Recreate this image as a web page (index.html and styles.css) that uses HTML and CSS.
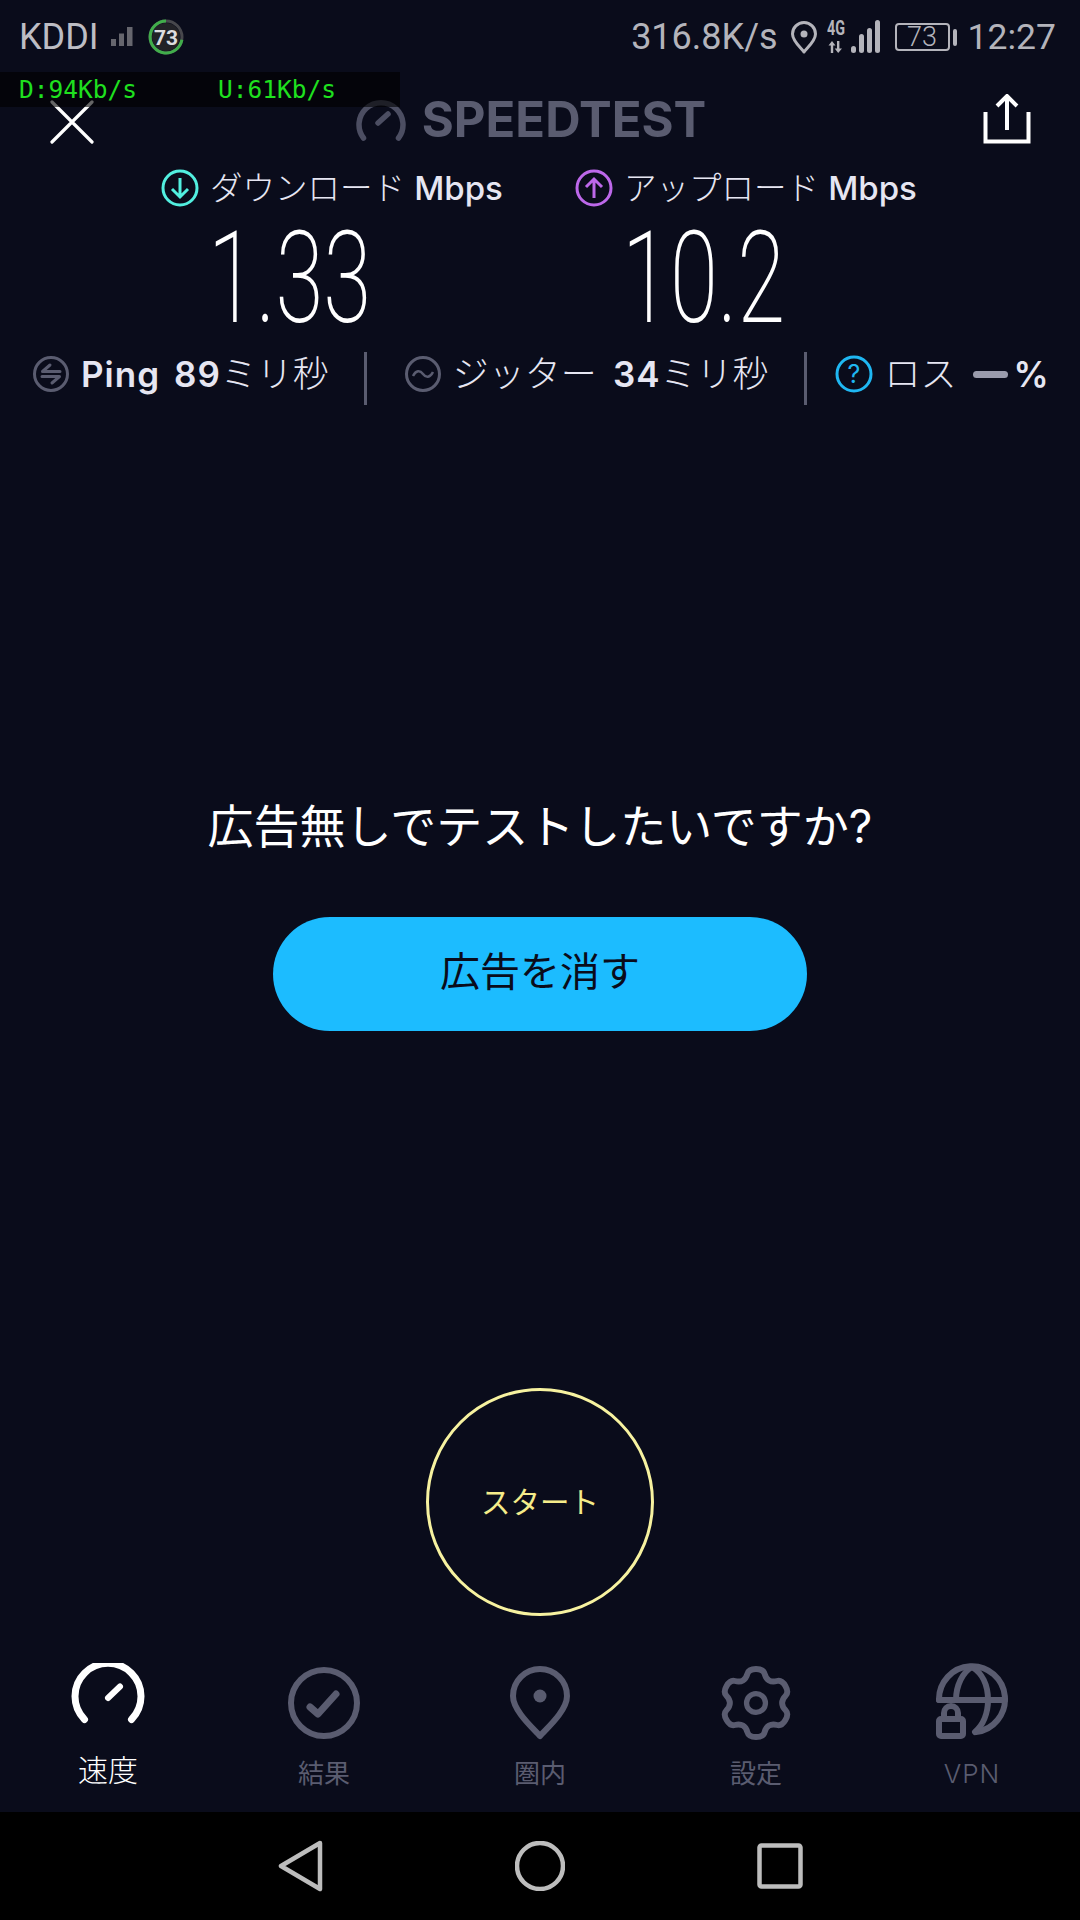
FILE: index.html
```html
<!DOCTYPE html>
<html lang="ja">
<head>
    <meta charset="UTF-8">
    <title>Speedtest</title>
    <link rel="stylesheet" href="styles.css">
</head>
<body>
<div class="screen">

    <!-- status bar -->
    <div class="status">
        <div class="status_l">
            <span class="carrier">KDDI</span>
            <svg class="mini_bars" width="22" height="20" viewBox="0 0 22 20"><path d="M0 12h5v7H0zM8 6.500h5V19H8zM16 0h5.500v19H16z" fill="#66666e"/></svg>
            <svg class="batt_ring" width="36" height="36" viewBox="0 0 36 36">
                <circle cx="18" cy="18" r="14" fill="#222227"/>
                <circle cx="18" cy="18" r="16" fill="none" stroke="#47474c" stroke-width="3"/>
                <path d="M18 2A16 16 0 1 0 33.900 20.800" fill="none" stroke="#41ad4b" stroke-width="3"/>
                <text x="18" y="25.500" text-anchor="middle" class="ring_text">73</text>
            </svg>
        </div>
        <div class="status_r">
            <span class="net">316.8K/s</span>
            <svg class="pin" width="28" height="33" viewBox="0 0 28 33"><path d="M14 31C11 27 2.500 20 2.500 13a11.500 11.500 0 0 1 23 0C25.500 20 17 27 14 31Z" fill="none" stroke="#b4b4bb" stroke-width="3" stroke-linejoin="round"/><circle cx="14" cy="13" r="3.500" fill="#b4b4bb"/></svg>
            <svg class="sig" width="53" height="34" viewBox="0 0 53 34">
                <text x="0" y="15" class="sig_text" textLength="18" lengthAdjust="spacingAndGlyphs">4G</text>
                <path d="M5 21l3.500 4.500H6.200V33H3.800v-7.500H1.500zM10 21h2.400v7.500h2.600L11.200 33l-3.500-4.500H10z" fill="#b4b4bb"/>
                <rect x="24" y="26" width="5" height="7" rx="2.500" fill="#b4b4bb"/>
                <rect x="32" y="14" width="5" height="19" rx="2.500" fill="#b4b4bb"/>
                <rect x="40" y="8" width="5" height="25" rx="2.500" fill="#b4b4bb"/>
                <rect x="48" y="0" width="5" height="33" rx="2.500" fill="#b4b4bb"/>
            </svg>
            <div class="batt"><span class="batt_box">73</span><span class="batt_tip"></span></div>
            <span class="clock">12:27</span>
        </div>
    </div>

    <!-- 通信量オーバーレイ -->
    <div class="netbar"><span class="net_d">D:94Kb/s</span><span class="net_u">U:61Kb/s</span></div>

    <div class="header">
        <svg class="close" width="44" height="44" viewBox="0 0 44 44"><path d="M2 2l40 40M42 2L2 42" stroke="#fff" stroke-width="3.200" stroke-linecap="round"/></svg>
        <div class="logo">
            <svg width="50" height="42" viewBox="0 0 50 42"><path d="M7.500 39A22 22 0 1 1 42.500 39" fill="none" stroke="#4c4e62" stroke-width="5.500" stroke-linecap="round"/><path d="M22 24L32 15" stroke="#4c4e62" stroke-width="5.500" stroke-linecap="round"/></svg>
            <span class="logo_t">SPEEDTEST</span>
        </div>
        <svg class="share" width="48" height="50" viewBox="0 0 48 50"><path d="M2.500 18v29.500h43V18" fill="none" stroke="#fff" stroke-width="4"/><path d="M24 36V3M14 12l10-10 10 10" fill="none" stroke="#fff" stroke-width="4"/></svg>
    </div>

    <div class="speeds">
        <div class="speed">
            <svg class="speed_i" width="38" height="38" viewBox="0 0 38 38"><circle cx="19" cy="19" r="17" fill="none" stroke="#52efe0" stroke-width="3"/><path d="M19 9v19M11 20l8 8 8-8" fill="none" stroke="#52efe0" stroke-width="3"/></svg>
            <div class="speed_b">
                <div class="speed_t">ダウンロード <b>Mbps</b></div>
                <div class="speed_n">1.33</div>
            </div>
        </div>
        <div class="speed">
            <svg class="speed_i" width="38" height="38" viewBox="0 0 38 38"><circle cx="19" cy="19" r="17" fill="none" stroke="#bd68ea" stroke-width="3"/><path d="M19 29V10M11 18l8-8 8 8" fill="none" stroke="#bd68ea" stroke-width="3"/></svg>
            <div class="speed_b">
                <div class="speed_t">アップロード <b>Mbps</b></div>
                <div class="speed_n">10.2</div>
            </div>
        </div>
    </div>

    <div class="stats">
        <svg class="stat_i" width="38" height="38" viewBox="0 0 38 38"><circle cx="19" cy="19" r="16.500" fill="none" stroke="#5a5c70" stroke-width="3"/><path d="M28 16.500H10.500L18 10M10 21.500H27.500L20 28" fill="none" stroke="#5a5c70" stroke-width="3" stroke-linecap="round" stroke-linejoin="round"/></svg>
        <span class="stat_t ping"><b>Ping</b></span>
        <span class="stat_t ping_v"><b>89</b>ミリ秒</span>
        <span class="sep sep_a"></span>
        <svg class="stat_i" width="38" height="38" viewBox="0 0 38 38"><circle cx="19" cy="19" r="16.500" fill="none" stroke="#5a5c70" stroke-width="3"/><path d="M9 21c3-6 7-6 10-2s7 4 10-2" fill="none" stroke="#5a5c70" stroke-width="2.500"/></svg>
        <span class="stat_t jit">ジッター</span>
        <span class="stat_t jit_v"><b>34</b>ミリ秒</span>
        <span class="sep sep_b"></span>
        <svg class="stat_i" width="38" height="38" viewBox="0 0 38 38"><circle cx="19" cy="19" r="17" fill="none" stroke="#1fb7f2" stroke-width="3"/><text x="19" y="28" text-anchor="middle" class="q_text">?</text></svg>
        <span class="stat_t loss">ロス</span>
        <span class="dash"></span>
        <span class="stat_t pct"><b>%</b></span>
    </div>

    <div class="promo">
        <div class="promo_t">広告無しでテストしたいですか?</div>
        <div class="promo_b">広告を消す</div>
    </div>

    <div class="start">スタート</div>

    <!-- tab bar -->
    <div class="tabs">
        <div class="tab on">
            <svg width="80" height="80" viewBox="0 0 80 80"><path d="M16.500 56.500A33 33 0 1 1 63.500 56.500" fill="none" stroke="#fff" stroke-width="7" stroke-linecap="round"/><path d="M40 35L52 23.500" stroke="#fff" stroke-width="6" stroke-linecap="round"/></svg>
            <span>速度</span>
        </div>
        <div class="tab">
            <svg width="80" height="80" viewBox="0 0 80 80"><circle cx="40" cy="40" r="33" fill="none" stroke="#5a5c70" stroke-width="6"/><path d="M26 44l8 7 18-20" fill="none" stroke="#5a5c70" stroke-width="7" stroke-linecap="round" stroke-linejoin="round"/></svg>
            <span>結果</span>
        </div>
        <div class="tab">
            <svg width="80" height="80" viewBox="0 0 80 80"><path d="M40 73C34 66 13 48 13 33A27 27 0 0 1 67 33C67 48 46 66 40 73Z" fill="none" stroke="#5a5c70" stroke-width="6" stroke-linejoin="round"/><circle cx="40" cy="33" r="6.500" fill="#5a5c70"/></svg>
            <span>圏内</span>
        </div>
        <div class="tab">
            <svg width="80" height="80" viewBox="2 2 76 76"><path d="M27.600 18.550Q30.600 16.800 31.850 12.250Q33.100 7.700 40 7.700Q46.900 7.700 48.150 12.250Q49.400 16.800 52.400 18.550Q55.400 20.300 59.950 19.100Q64.500 17.900 67.950 23.850Q71.400 29.800 68.100 33.150Q64.800 36.500 64.800 40Q64.800 43.500 68.100 46.850Q71.400 50.200 67.950 56.150Q64.500 62.100 59.950 60.900Q55.400 59.700 52.400 61.450Q49.400 63.200 48.150 67.750Q46.900 72.300 40 72.300Q33.100 72.300 31.850 67.750Q30.600 63.200 27.600 61.450Q24.600 59.700 20.050 60.900Q15.500 62.100 12.050 56.150Q8.600 50.200 11.900 46.850Q15.200 43.500 15.200 40Q15.200 36.500 11.900 33.150Q8.600 29.800 12.050 23.850Q15.500 17.900 20.050 19.100Q24.600 20.300 27.600 18.550Z" fill="none" stroke="#5a5c70" stroke-width="5.600"/><circle cx="40" cy="40" r="9" fill="none" stroke="#5a5c70" stroke-width="5"/></svg>
            <span>設定</span>
        </div>
        <div class="tab">
            <svg width="80" height="80" viewBox="0 0 80 80"><g fill="none" stroke="#5a5c70" stroke-width="6" stroke-linecap="round" stroke-linejoin="round"><path d="M7 37A33 33 0 1 1 44 69"/><path d="M7 37H73"/><path d="M24 37C24 22 31 9 40 4C50 10 56 22 56 37C56 50 51 62 43 69"/><rect x="7" y="56" width="24" height="17" rx="2"/><path d="M12 56V50A7 7 0 0 1 26 50V56"/></g></svg>
            <span class="tab_vpn">VPN</span>
        </div>
    </div>

    <div class="nav">
        <svg width="46" height="52" viewBox="0 0 46 52"><path d="M42 3L3 26l39 23Z" fill="none" stroke="#bdbdbd" stroke-width="4.500" stroke-linejoin="round"/></svg>
        <svg width="50" height="50" viewBox="0 0 50 50"><circle cx="25" cy="25" r="23" fill="none" stroke="#bdbdbd" stroke-width="4.500"/></svg>
        <svg width="46" height="46" viewBox="0 0 46 46"><rect x="2.500" y="2.500" width="41" height="41" rx="2" fill="none" stroke="#bdbdbd" stroke-width="4.500"/></svg>
    </div>

</div>
</body>
</html>
```

FILE: styles.css
```css
* {
    box-sizing: border-box;
}
body {
    margin: 0;
    background-color: #0a0c1b;
    font-family: "Inter", "Noto Sans CJK JP", sans-serif;
}
.screen {
    position: relative;
    width: 1080px;
    height: 1920px;
    display: flex;
    flex-direction: column;
    overflow: hidden;
}

/* status bar */
.status {
    height: 74px;
    padding: 0 24px 0 19px;
    display: flex;
    justify-content: space-between;
    align-items: center;
    font-family: "Roboto", sans-serif;
    font-size: 36px;
    color: #b4b4bb;
}
.status_l, .status_r {
    display: flex;
    align-items: center;
}
.carrier {
    color: #bdbdc4;
}
.mini_bars {
    margin-left: 12px;
}
.batt_ring {
    margin-left: 15px;
}
.ring_text {
    font-family: "Roboto", sans-serif;
    font-size: 21px;
    font-weight: 700;
    fill: #dcdcdf;
}
.pin {
    margin-left: 12px;
}
.sig {
    margin-left: 9px;
}
.sig_text {
    font-family: "Roboto", sans-serif;
    font-size: 20px;
    font-weight: 700;
    fill: #b4b4bb;
}
.batt {
    margin-left: 15px;
    display: flex;
    align-items: center;
}
.batt_box {
    width: 55px;
    height: 28px;
    border: 2px solid #b4b4bb;
    border-radius: 4px;
    font-size: 27px;
    font-weight: 300;
    line-height: 24px;
    text-align: center;
}
.batt_tip {
    width: 4px;
    height: 17px;
    margin-left: 3px;
    background-color: #b4b4bb;
    border-radius: 2px;
}
.clock {
    margin-left: 11px;
    font-size: 35.500px;
}

/* overlay from the speed monitor app */
.netbar {
    position: absolute;
    left: 0;
    top: 72px;
    width: 400px;
    height: 35px;
    padding-left: 19px;
    background-color: rgba(0, 0, 0, 0.6);
    font-family: "DejaVu Sans Mono", monospace;
    font-size: 24.500px;
    line-height: 35px;
    color: #1fe01f;
    display: flex;
    z-index: 2;
}
.net_u {
    margin-left: 81px;
}

/* header */
.header {
    height: 90px;
    padding: 0 49px 0 50px;
    display: flex;
    justify-content: space-between;
    align-items: center;
}
.close {
    margin-top: 6px;
}
.logo {
    display: flex;
    align-items: center;
    gap: 16px;
    margin: 2px 15px 0 0;
}
.logo_t {
    font-size: 49px;
    font-weight: 700;
    color: #5a5c70;
    line-height: 50px;
}

/* speeds */
.speeds {
    display: flex;
    padding-left: 161px;
}
.speed {
    width: 414px;
    display: flex;
    gap: 11px;
}
.speed_i {
    margin-top: 5px;
}
.speed_t {
    height: 48px;
    font-size: 32.500px;
    font-weight: 300;
    line-height: 48px;
    color: #e6e6f2;
    white-space: nowrap;
}
.speed_t b {
    font-weight: 500;
    font-size: 33px;
}
.speed_n {
    height: 130px;
    margin-left: -2px;
    font-family: "Roboto", sans-serif;
    font-size: 128px;
    font-weight: 200;
    line-height: 132px;
    color: #fff;
    transform: scaleX(0.68);
    transform-origin: left;
}

/* ping etc */
.stats {
    height: 54px;
    margin-top: 5px;
    padding-left: 32px;
    display: flex;
    align-items: center;
    color: #e6e6f2;
    white-space: nowrap;
}
.stat_t {
    font-size: 36px;
    font-weight: 300;
    line-height: 54px;
}
.stat_t b {
    font-size: 35px;
    font-weight: 600;
    letter-spacing: 1px;
}
.ping {
    margin-left: 11px;
}
.ping_v {
    margin-left: 14px;
}
.sep {
    width: 3px;
    height: 53px;
    margin-top: 8px;
    background-color: #5a5c70;
}
.sep_a {
    margin-left: 35px;
    margin-right: 37px;
}
.sep_b {
    margin-left: 36px;
    margin-right: 28px;
}
.jit {
    margin-left: 11px;
}
.jit_v {
    margin-left: 16px;
}
.loss {
    margin-left: 11px;
}
.dash {
    width: 35px;
    height: 7px;
    margin-left: 16px;
    background-color: #9a9bac;
    border-radius: 4px;
}
.pct {
    margin-left: 6px;
}
.q_text {
    font-family: "Inter", sans-serif;
    font-size: 25px;
    fill: #1fb7f2;
}

/* promo */
.promo {
    margin-top: 390px;
    display: flex;
    flex-direction: column;
    align-items: center;
}
.promo_t {
    height: 70px;
    font-size: 46px;
    font-weight: 400;
    line-height: 70px;
    color: #fff;
}
.promo_b {
    width: 534px;
    height: 114px;
    margin-top: 56px;
    background-color: #1cbcff;
    border-radius: 57px;
    font-size: 40px;
    font-weight: 400;
    line-height: 110px;
    text-align: center;
    color: #0a0c1b;
}

.start {
    width: 228px;
    height: 228px;
    margin: 357px auto 0;
    border: 3px solid #f7f2a0;
    border-radius: 50%;
    font-size: 29.500px;
    font-weight: 400;
    line-height: 222px;
    text-align: center;
    color: #f5ec8a;
}

/* tab bar */
.tabs {
    flex: 1;
    padding-top: 47px;
    display: grid;
    grid-template-columns: repeat(5, 1fr);
}
.tab {
    display: flex;
    flex-direction: column;
    align-items: center;
    font-size: 26px;
    font-weight: 400;
    line-height: 36px;
    color: #5a5c70;
}
.tab svg {
    margin-bottom: 13px;
}
.tab.on {
    font-size: 30px;
    font-weight: 300;
    color: #fff;
}
.tab.on span {
    margin-top: -4px;
}
.tab_vpn {
    font-weight: 300;
    letter-spacing: 1px;
}

.nav {
    height: 108px;
    background-color: #000;
    display: flex;
    align-items: center;
}
.nav svg:nth-child(1) {
    margin-left: 278px;
}
.nav svg:nth-child(2) {
    margin-left: 191px;
}
.nav svg:nth-child(3) {
    margin-left: 192px;
}
```
